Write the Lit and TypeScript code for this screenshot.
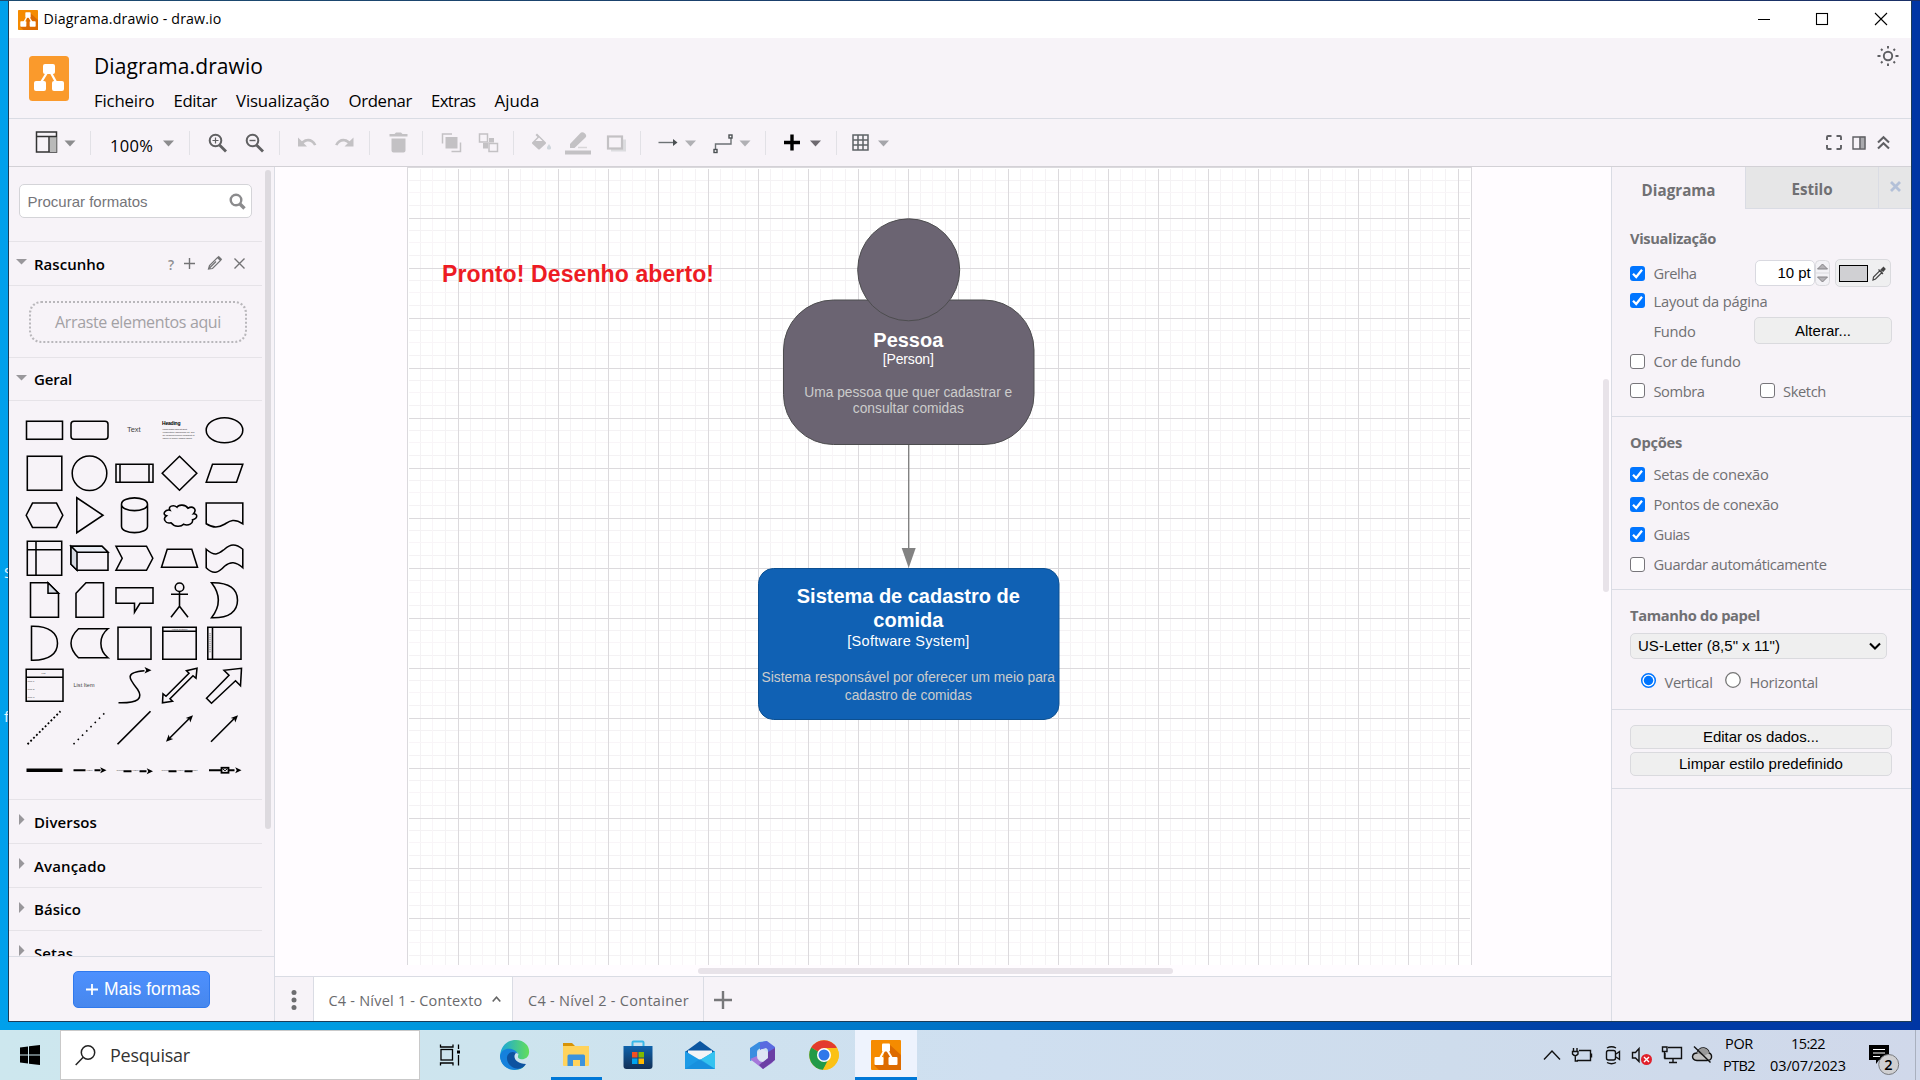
import { LitElement, html, css, svg, nothing } from "lit";
import { customElement, property } from "lit/decorators.js";

/** Inline text whose tracking is adjusted so that it spans a given width. */
@customElement("fit-text")
class FitText extends LitElement {
  @property({ type: Number }) w = 0;
  static styles = css`
    :host { display: inline-block; white-space: nowrap; line-height: 1.3; flex: none; }
    .run { display: inline-block; }
  `;
  render() {
    return html`<span class="run"><slot></slot></span>`;
  }
  firstUpdated() {
    const run = this.renderRoot.querySelector(".run") as HTMLElement;
    const n = (this.textContent ?? "").length;
    const spacing = (this.w - run.getBoundingClientRect().width) / n;
    run.style.letterSpacing = `${spacing}px`;
    this.style.width = `${this.w}px`;
  }
}

const fit = (text: string, w: number, cls = "") => html`<fit-text class=${cls} .w=${w}>${text}</fit-text>`;

const drawioLogo = (size: number, h = size) => html`
  <svg width=${size} height=${h} viewBox="0 0 30 30" preserveAspectRatio="none">
    <rect width="30" height="30" rx="1" fill="#f58b00" />
    <path d="M18 4 30 15V30H8L3 25 13 20 13 11Z" fill="#dd6b00" />
    <path d="M14 9 8 20M15.5 9 22 20" stroke="#fff" stroke-width="2" />
    <rect x="11" y="3.5" width="8" height="8" rx="1" fill="#fff" />
    <rect x="3.5" y="17" width="9" height="8" rx="1" fill="#fff" />
    <rect x="17.5" y="17" width="9" height="8" rx="1" fill="#fff" />
  </svg>`;

/* ---------- toolbar ---------- */
const drop = (x: number, c = "#8c8c8e") => svg`<path d="M${x} 140h11l-5.500 6z" fill=${c} />`;
const OFF = "#c3c1c4";

const toolbarGroups = [
  { from: 9, to: 91, art: svg`
    <rect x="36.500" y="131.500" width="20" height="20" fill="#f7f3f8" stroke="#333" stroke-width="1.500"/>
    <rect x="49.500" y="136.500" width="7" height="15" fill="#b9b9b9"/><path d="M36.500 136h20M49 136.500v15" stroke="#333" stroke-width="1.500"/>${drop(64.5)}` },
  { from: 91, to: 190, art: svg`<text x="110" y="151.500" class="zoom" textLength="43">100%</text>${drop(163)}` },
  { from: 190, to: 280, art: svg`
    <g stroke="#606062" fill="none" stroke-width="2"><circle cx="215.500" cy="140" r="5.800"/><path d="M219.500 144.500 226 151" stroke-width="2.800"/>
    <path d="M212.500 140h6M215.500 137v6" stroke-width="1.200"/>
    <circle cx="252.500" cy="140" r="5.800"/><path d="M256.500 144.500 263 151" stroke-width="2.800"/><path d="M249.500 140h6" stroke-width="1.400"/></g>` },
  { from: 280, to: 370, art: svg`
    <path d="M298 137v9h9l-3.300-3.300c4-3 8-1.800 10.300 2.300l2.400-.8c-3.200-6.500-9.500-7.500-14.500-3.400z" fill=${OFF}/>
    <path d="M353.500 137v9h-9l3.300-3.300c-4-3-8-1.800-10.300 2.300l-2.400-.8c3.200-6.500 9.500-7.500 14.500-3.400z" fill=${OFF}/>` },
  { from: 370, to: 423, art: svg`<path d="M389.500 133.500h5l1.500-1.500h5l1.500 1.500h5v2.500h-18zM391.500 138h14v12q0 2-2 2h-10q-2 0-2-2z" fill=${OFF}/>` },
  { from: 423, to: 514, art: svg`
    <g fill="none" stroke=${OFF} stroke-width="1.500"><path d="M442.500 143v-9.500h9.500M460.500 142v9h-9"/>
    <rect x="479.500" y="133.500" width="8" height="8"/><rect x="489" y="143" width="8.500" height="8"/></g>
    <rect x="445.500" y="136.500" width="12" height="11.500" fill=${OFF}/>
    <path d="M489 137.500h5v4.500h-6v6h-5v-5.500h6z" fill=${OFF}/>` },
  { from: 514, to: 641, art: svg`
    <path d="M537 133l8.500 8.500c.7.700.7 1.300 0 2l-5.500 5c-.7.700-1.300.7-2 0l-5.500-5c-.7-.7-.7-1.300 0-2l5-5-2-2z" fill=${OFF}/>
    <path d="M535.500 140.500l3.500-3.500 3.500 3.500z" fill="#f7f3f8"/><path d="M549 143.500c3 4 2.500 5.500 0 5.500s-3-1.500 0-5.500z" fill="#cfd6dc"/>
    <path d="M570 143.500l10-10.500q2-2.500 5 0 2.500 2.500 0 4.500l-10.500 10h-4.500z" fill=${OFF}/><path d="M578 147h9" stroke="#d8d6d9" stroke-width="1.500"/>
    <rect x="565" y="150" width="26" height="4" fill=${OFF}/>
    <rect x="611" y="139" width="15" height="12" fill="#dcdcdf"/><rect x="608" y="136" width="14" height="12" fill="#f7f3f8" stroke=${OFF} stroke-width="2.200"/>` },
  { from: 641, to: 766, art: svg`
    <path d="M658.500 142h15" stroke="#6d7275" stroke-width="1.400"/><path d="M673 138.500l4.500 3.500-4.500 3.500z" fill="#4b5053"/>${drop(685, "#b0b0b4")}
    <path d="M715.500 149v-5.500h15.500v-6" stroke="#6d7275" stroke-width="1.400" fill="none"/>
    <g fill="#fff" stroke="#4b5053" stroke-width="1.400"><rect x="714" y="149" width="3" height="3"/><rect x="729" y="134.500" width="3" height="3"/></g>${drop(739.5, "#b0b0b4")}` },
  { from: 766, to: 837, art: svg`<path d="M784 142h16M792 134v16" stroke="#000" stroke-width="3.400"/>${drop(810, "#6e6a70")}` },
  { from: 837, to: 910, art: svg`
    <path d="M853 134.500h15v15h-15zM858 134.500v15M863 134.500v15M853 139.500h15M853 144.500h15" stroke="#5e6366" stroke-width="1.500" fill="none"/>${drop(878, "#a5a5aa")}` },
];

/* ---------- shape palette, drawn around each cell's centre ---------- */
const arrowHead = (x: number, y: number, a: number, s = 1) =>
  svg`<path transform="translate(${x} ${y}) rotate(${a}) scale(${s})" d="M0 0-7-3.200-5.300 0-7 3.200z" fill="#000" stroke="none"/>`;

const shapes = [
  svg`<rect x="-18" y="-9" width="36" height="18"/>`,
  svg`<rect x="-18.500" y="-9" width="37" height="18" rx="3"/>`,
  svg`<text class="tiny" x="-7.500" y="1.500" textLength="13.500">Text</text>`,
  svg`<text class="micro" x="-17.500" y="-5.500" textLength="18.500">Heading</text>
    <g class="lorem"><text x="-17" y="-.200" textLength="25">Lorem ipsum dolor sit amet,</text><text x="-17" y="2.700" textLength="32">consectetur adipisicing elit, sed</text><text x="-17" y="5.500" textLength="32">do eiusmod tempor incididunt ut</text><text x="-17" y="8.300" textLength="30">labore et dolore magna aliqua.</text></g>`,
  svg`<ellipse rx="18.300" ry="12.500"/>`,
  svg`<rect x="-17.200" y="-17" width="34.500" height="34"/>`,
  svg`<circle r="17.300"/>`,
  svg`<path d="M-18.500-9h37V9h-37zM-14.500-9V9M14.500-9V9"/>`,
  svg`<path d="M0-17 17.300 0 0 17-17.300 0z"/>`,
  svg`<path d="M-18.300 9-12-9H18.300L12 9z"/>`,
  svg`<path d="M-18.300 0-12-12.200H12L18.300 0 12 12.200H-12z"/>`,
  svg`<path d="M-12.700-17.500 13.500 0-12.700 17.500z"/>`,
  svg`<path d="M-13-11V11C-13 19.500 13 19.500 13 11V-11C13-19.500-13-19.500-13-11C-13-2.500 13-2.500 13-11"/>`,
  svg`<path d="M-9.500-5C-14-6-18-1-13 .500-17 3-14.500 9-8.500 7.500-5 12 1.500 12 4 9 9 11 14 8 13 4.500 19 3 18-2 14-1.500 18-6 13-10 8.500-7 6-11-1-11-2.500-8-6-11-12-9-9.500-5z"/>`,
  svg`<path d="M-18.300-12.200H18.300V8.500C9 2.500 5 6 0 9-6 12.500-11 13-18.300 8.500z"/>`,
  svg`<path d="M-17.200-17H17.200V17H-17.200zM-17.200-8.500H17.200M-8.500-17V17"/>`,
  svg`<path d="M-18.500-12H12.500L18.500-6V12H-12.500L-18.500 6z"/><path d="M-18.500-12H12.500L18.500-6H-12.500z" fill="#e8ecf4"/><path d="M-18.500-12-12.500-6V12L-18.500 6z" fill="#d5d9e0"/>`,
  svg`<path d="M-18.500-12H12L18.300 0 12 12H-18.500L-12.300 0z"/>`,
  svg`<path d="M-18 9-12.300-9H12.300L18 9z"/>`,
  svg`<path d="M-18.300-9C-9-1-6-4.500 0-9 6-14.500 11-15 18.300-9V9.500C11 3 6 3 0 8-6 14.500-11 17-18.300 9.500z"/>`,
  svg`<path d="M-14-17.500H3.500L14-7V17H-14z"/><path d="M3.500-17.500V-7H14z" fill="#d8dde6"/>`,
  svg`<path d="M-3.500-17.500H14V17H-13.500V-7z"/>`,
  svg`<path d="M-18.500-12.500H18.500V3H5.500L0 12V3H-18.500z"/>`,
  svg`<circle cy="-13" r="4.300"/><path d="M0-8.500V6M-8.500-6H8.500M0 6-8.500 17M0 6 8.500 17"/>`,
  svg`<path d="M-13-17.500C5-18 13-11 13 0S5 18-13 17.500C-4 6-4-6-13-17.500z"/>`,
  svg`<path d="M-13-17C5-17.500 13-10 13 0S5 17.500-13 17z"/>`,
  svg`<path d="M-11-14.500H18.500C9-7 9 7 18.500 14.500H-11C-21 5-21-5-11-14.500z"/>`,
  svg`<rect x="-16.500" y="-16" width="33" height="32"/>`,
  svg`<path d="M-16.700-16H16.700V16H-16.700zM-16.700-12H16.700"/><text class="lorem dark" x="-8" y="-13" textLength="16">Vertical Container</text>`,
  svg`<path d="M-16.700-16H16.500V16H-16.700zM-12-16V16"/><path d="M-14.500-10V10" stroke-dasharray="1 1" stroke-width=".7"/>`,
  svg`<path d="M-18.300-16H18.500V16H-18.300zM-18.300-8H18.500"/><g class="lorem"><text x="-3" y="-11">List</text><text x="-17" y="-3">Item 1</text><text x="-17" y="5">Item 2</text><text x="-17" y="13">Item 3</text></g>`,
  svg`<text class="tiny small" x="-16" y="1.500" textLength="21">List Item</text>`,
  svg`<path d="M-16 17.500C4 18 9 13 3 4-5-6-11-13 10-14.500"/>${arrowHead(17, -15, 0)}`,
  svg`<path d="M-17 17.500-16.500 8.500-13.500 11 9.500-12 7-14.500 17.500-17 16.500-7 13.500-9.500-9.500 13.500-7 16z"/>`,
  svg`<path d="M-18 13 4.500-10-.500-15 17-17 16 .500 11-4.500-13 18z"/>`,
  svg`<path d="M-17 16 16-17" stroke-width="1.800" stroke-dasharray="1.900 2.200"/>`,
  svg`<path d="M-16 16 15-15" stroke-width="1.600" stroke-dasharray="1.600 4.400"/>`,
  svg`<path d="M-17 16 16-17" stroke-width="1.700"/>`,
  svg`<path d="M-10 10 10-10"/>${arrowHead(13.500, -13, -45)}${arrowHead(-13.500, 13.500, 135)}`,
  svg`<path d="M-13.500 13.500 10-10"/>${arrowHead(13.500, -13, -45)}`,
  svg`<path d="M-18 0H18" stroke-width="3.300"/>`,
  svg`<path d="M-16 0H-4M5 0H11" stroke-width="2"/><text class="lorem" x="-3" y="1">Label</text>${arrowHead(17, 0, 0, 0.9)}`,
  svg`<path d="M-11 1H-3M5 1H12" stroke-width="2"/><g class="lorem"><text x="-18" y="1">Source</text><text x="-2" y="1">Label</text></g>${arrowHead(18.500, 1, 0, 0.9)}`,
  svg`<path d="M-11 1H-3M5 1H13" stroke-width="1.800"/><g class="lorem"><text x="-18" y="1">Source</text><text x="-2" y="1">Label</text><text x="11" y="1">Target</text></g>`,
  svg`<path d="M-15.500 0H10" stroke-width="2"/><rect x="-3" y="-2.500" width="7" height="5" fill="#f7f3f8" stroke-width="1.800"/><path d="M-2-1.500.500.500 3-1.500" stroke-width="1"/>${arrowHead(17, 0, 0, 0.9)}`,
];

/* ---------- taskbar apps ---------- */
const apps = [
  { cls: "", art: svg`<g transform="translate(-6.500 0)"><g stroke="#000" fill="none" stroke-width="1.300"><rect x="10.500" y="9.500" width="11.500" height="10.500"/><path d="M10 4.500V7H22.500V4.500M10 25.500V23H22.500V25.500M28 4.500V9M28 15V25.500"/></g><rect x="26.500" y="10.500" width="3" height="3"/></g>` },
  { cls: "", art: svg`<path d="M1 16C2 4 10 0 17 0c9 0 14 7 13 13-.6 5-5 7-9 6-3-.8-2-3-1.500-5-2-4-9-3-9 4 0 7 7 11 15 8C20 33 2 31 1 16z" fill="url(#ea)"/><path d="M1 16c1-7 9-9 14-6 2 1 3 2 4 4-4-3-10 0-9 6 1 7 9 9 16 5C21 33 2 32 1 16z" fill="#1581dc"/><path d="M8 17c1-5 6-6 9-4-4 4 0 11 10 11-5 9-20 4-19-7z" fill="#0d53a0"/><defs><linearGradient id="ea"><stop stop-color="#1aa5dd"/><stop offset="1" stop-color="#63de5a"/></linearGradient></defs>` },
  { cls: "open", art: svg`<path d="M2 3h9l3 3h-12z" fill="#d79307"/><path d="M2 6h26v19q0 1-1 1H3q-1 0-1-1z" fill="#ffd35c"/><path d="M6.500 26V16q0-1.500 1.500-1.500H22.500Q24 14.500 24 16V26H19V20H12V26z" fill="#3c93dc"/>` },
  { cls: "", art: svg`<path d="M9.500 7V2.500q0-1 1-1h9q1 0 1 1V7" fill="none" stroke="#39b8e8" stroke-width="2"/><path d="M.500 6H29.500V26q0 3-3 3H3.500q-3 0-3-3z" fill="url(#st)"/><path d="M9 12h5.500v5.500H9z" fill="#f25022"/><path d="M15.500 12H21v5.500h-5.500z" fill="#7fba00"/><path d="M9 18.500h5.500V24H9z" fill="#00a4ef"/><path d="M15.500 18.500H21V24h-5.500z" fill="#ffb900"/><defs><linearGradient id="st" x2="0" y2="1"><stop stop-color="#0f63ac"/><stop offset="1" stop-color="#123057"/></linearGradient></defs>` },
  { cls: "", art: svg`<path d="M0 12 15 1 30 12V16H0z" fill="#0c56a0"/><path d="M3 10.500H27V20H3z" fill="#f4f4f6"/><path d="M0 11 15 20 30 11V29H0z" fill="#1d9be6"/><path d="M30 11V29L12 18.200 15 20z" fill="#35c3f0"/><path d="M0 29 15 19 30 29z" fill="#1689d8" opacity=".6"/>` },
  { cls: "", art: svg`<path d="M12 2 3 8v13l7-3v-6q0-2 2-3l6-3 2-5z" fill="#3a8ee0"/><path d="M13 2.500 20 1l8 6v13l-7-3v-6q0-2-2-3l-6 2z" fill="#5a6be0"/><path d="M3 19l7-3q1 6 6 6l12-3-3 4-9 6z" fill="#a478da"/><path d="M21 12l7-4v12l-12 9-4-4 9-7z" fill="#6b3fa5"/><path d="M10.500 12 15 9l5.500 3v6L16 21.500l-5.500-3z" fill="#dfe6f4"/>` },
  { cls: "", art: svg`<circle cx="15" cy="15" r="14.800" fill="#fbc116"/><path d="M15 15 2.200 7.600A14.800 14.800 0 0 1 27.800 7.600z" fill="#e33b2e"/><path d="M15 15 2.200 7.600A14.800 14.800 0 0 0 14 29.800L20 18z" fill="#229a48"/><path d="M15 8H28A14.800 14.800 0 0 1 14 29.800L21.500 18z" fill="#fbc116"/><circle cx="15" cy="15" r="7" fill="#fff"/><circle cx="15" cy="15" r="5.500" fill="#2f78ea"/>` },
];

@customElement("app-root")
class AppRoot extends LitElement {
  static styles = css`
    :host { display: block; width: 1920px; height: 1080px; overflow: hidden; font-family: "Open Sans", "Noto Sans", sans-serif; font-size: 14.700px; color: #000; }
    * { box-sizing: border-box; }
    svg { display: block; flex: none; overflow: visible; }
    .desktop { width: 1920px; height: 1080px; display: flex; flex-direction: column;
      background: linear-gradient(90deg, #00a0ec 0, #009be0 350px, #0073c6 950px, #0040a6 1560px, #0036a4 1920px); }
    .workspace { display: flex; height: 1030px; padding-top: 1px; background: linear-gradient(90deg, #1b4b70, #1a2f66) top / 100% 1px no-repeat; }
    .strip { width: 8px; overflow: hidden; color: #e8f6ff; font-size: 15px; padding: 561px 0 0 4px; line-height: 20px; display: flex; flex-direction: column; gap: 124px; }
    .window { width: 1904px; height: 1021px; background: #f7f3f8; border: 1px solid #1c3c58; border-top: 0; display: flex; flex-direction: column; }

    .titlebar { height: 37px; background: #fff; display: flex; align-items: center; padding: 0 24px 0 9px; gap: 5.500px; flex: none; }
    .titlebar .caption { font-size: 14.200px; }
    .titlebar .controls { margin-top: -1px; }
    .grow { flex: 1; }
    .header { height: 81px; border-bottom: 1px solid #dadce4; display: flex; padding: 0 12px 0 20px; flex: none; }
    .logo { padding-top: 18px; }
    .names { padding-left: 25px; display: flex; flex-direction: column; }
    .doc { font-size: 21px; height: 28px; margin-top: 14px; }
    .menu { display: flex; gap: 19px; margin-top: 10px; font-size: 16.800px; }
    .sun { padding-top: 7px; }
    .toolbar { height: 48px; display: flex; align-items: center; border-bottom: 1px solid #d3d1d6; flex: none; }
    .tgroup { display: flex; align-items: center; height: 24px; border-right: 1px solid #e2e1e6; }
    .tgroup:last-of-type { border: 0; }
    .zoom { font-size: 16.500px; }

    .body { display: flex; height: 854px; }
    .sidebar { width: 266px; border-right: 1px solid #dadce4; display: flex; flex-direction: column; flex: none; }
    .scroller { height: 790px; display: flex; overflow: hidden; border-bottom: 1px solid #dadce4; flex: none; }
    .list { width: 253px; flex: none; }
    .bar { width: 6px; height: 659px; margin: 3px 0 0 3px; border-radius: 3px; background: #dddadf; }
    .searchwrap { height: 75px; padding: 17px 0 0 10px; border-bottom: 1px solid #e6e3e8; }
    .search { width: 233px; height: 34px; background: #fff; border: 1px solid #d4d4d8; border-radius: 5px; display: flex; align-items: center; justify-content: space-between; padding: 0 5px 0 7.500px; font-family: "Liberation Sans", sans-serif; font-size: 15px; color: #75757a; }
    .search fit-text { margin-top: 1px; }
    .sec { border-bottom: 1px solid #e6e3e8; display: flex; align-items: center; font-weight: 600; font-size: 15px; height: 43.700px; padding-left: 7px; }
    .sec fit-text { margin-top: 2px; }
    .sec svg { margin-right: 7px; margin-top: -4px; }
    .sec .tools { margin: 0 0 0 62px; }
    .dropzone { height: 72px; border-bottom: 1px solid #e6e3e8; padding: 15px 0 0 20px; }
    .dropbox { width: 218px; height: 42px; border: 2px dotted #b9b7bb; border-radius: 12px; display: flex; align-items: center; justify-content: center; color: #a3a1a5; font-size: 16px; padding-top: 2px; }
    .palette { height: 399px; padding: 8px 0 0 13px; border-bottom: 1px solid #e6e3e8; display: grid; grid-template-columns: repeat(5, 45px); grid-template-rows: repeat(9, 42.500px); }
    .palette svg { fill: none; stroke: #000; stroke-width: 1.550; }
    .palette text { fill: #444; stroke: none; font-family: "Liberation Sans", sans-serif; }
    .palette .tiny { font-size: 7.500px; } .palette .tiny.small { font-size: 5.500px; }
    .palette .micro { font-size: 5px; font-weight: bold; fill: #000; }
    .lorem { font-size: 2.500px; }
    .morewrap { flex: 1; padding: 14px 0 0 64px; }
    .more { width: 137px; height: 37px; border: 1px solid #3079ed; border-radius: 5px; background: linear-gradient(#4d90fe, #4787ed); color: #fff; font-family: "Liberation Sans", sans-serif; font-size: 17.500px; display: flex; align-items: center; gap: 6px; padding-left: 12px; }

    .center { width: 1336px; display: flex; flex-direction: column; background: #fffcff; }
    .canvas { height: 810px; border-bottom: 1px solid #dadce4; position: relative; padding-left: 132px; overflow: hidden; flex: none; }
    .canvas text { font-family: "Liberation Sans", sans-serif; }
    .vbar { position: absolute; left: 1328px; top: 212px; width: 6px; height: 213px; background: #e8e3e9; border-radius: 3px; }
    .hbar { position: absolute; left: 423px; top: 801px; width: 475px; height: 6px; background: #e8e3e9; border-radius: 3px; }
    .tabs { height: 44px; background: #f7f3f8; display: flex; align-items: center; color: #6a6a6d; font-size: 14.500px; font-weight: 500; }
    .tab { height: 44px; display: flex; align-items: center; border-right: 1px solid #dadce4; }
    .tab fit-text { margin-top: 4px; }
    .dots { width: 39px; padding: 2px 0 0 16px; }
    .on { width: 199px; background: #fff; padding-left: 14.500px; gap: 9px; }
    .two { width: 191px; padding-left: 15px; }
    .plus { padding: 2px 0 0 10px; }

    .panel { width: 300px; border-left: 1px solid #dadce4; color: #707073; font-size: 14.700px; display: flex; flex-direction: column; }
    .ptabs { display: flex; height: 42px; font-weight: 700; font-size: 15.200px; }
    .ptab { display: flex; align-items: center; justify-content: center; }
    .p1 { width: 133px; padding-top: 6px; }
    .p2 { width: 134px; background: #e6e6e7; border: 1px solid #dadce4; border-top: 0; padding-top: 5px; }
    .p3 { width: 32px; background: #e6e6e7; border-bottom: 1px solid #dadce4; padding-bottom: 3px; }
    .psec { border-bottom: 1px solid #dadce4; padding: 9px 0 0 18px; }
    .s1 { height: 208px; padding-top: 13px; } .s2 { height: 173px; } .s3 { height: 120px; } .s4 { height: 79px; padding-top: 15px; }
    .h { font-weight: 700; height: 33px; display: flex; align-items: center; font-size: 14.700px; }
    .s1 .h { height: 37px; padding-bottom: 3px; }
    .s3 .h { height: 34px; }
    .row { display: flex; align-items: center; height: 30px; }
    .row > fit-text, .indent fit-text { margin-top: 2px; }
    .r28 { height: 28px; } .r27 { height: 27px; } .r33 { height: 33px; } .r31 { height: 31px; }
    .cb { width: 15px; height: 15px; border: 1.500px solid #77757a; border-radius: 3px; background: #fff; margin-right: 8.500px; flex: none; }
    .cb.ck { border: 0; background: #0075ff; }
    .cb.second { margin-left: 55px; }
    .indent { margin-left: 23.500px; }
    .ui { font-family: "Liberation Sans", sans-serif; color: #000; font-size: 15px; }
    .num { width: 60px; height: 26px; border: 1px solid #d9d9e0; border-radius: 5px; background: #fff; display: flex; align-items: center; justify-content: flex-end; padding-right: 3px; margin-left: 58px; }
    .spin { width: 15px; height: 26px; }
    .colour { width: 56px; height: 28px; border: 1px solid #dadade; border-radius: 5px; background: #efeff0; margin-left: 5px; display: flex; align-items: center; gap: 4px; padding-left: 3px; }
    .swatch { width: 29px; height: 17px; border: 1px solid #000; background: #d0d0d3; }
    .btn { border: 1px solid #dadade; border-radius: 5px; background: #efefef; display: flex; align-items: center; justify-content: center; width: 262px; height: 24px; margin-bottom: 2.500px; }
    .alt { width: 138px; height: 27px; margin: 0 0 0 58.500px; }
    .sel { width: 257px; height: 26px; border: 1px solid #dadade; border-radius: 5px; background: #efefef; display: flex; align-items: center; justify-content: space-between; padding: 0 5px 0 7px; }
    .radios { height: 42px; padding: 0 0 0 10.500px; }
    .radios > fit-text { margin: 6px 12px 0 9px; }

    .taskbar { height: 50px; display: flex; background: linear-gradient(90deg, #cde7ee, #cde4ee 500px, #cfdff0 1000px, #cedcec 1450px, #d0d8ea); font-size: 14.500px; }
    .start { width: 60px; padding: 15px 0 0 20px; }
    .find { width: 360px; height: 50px; background: #fff; border: 1px solid #c9c9c9; display: flex; align-items: center; gap: 14px; padding-left: 14px; font-size: 18px; color: #333; }
    .find fit-text { margin-top: 2px; }
    .apps { display: flex; padding-left: 1px; width: 435px; }
    .app { width: 62px; height: 50px; display: flex; justify-content: center; padding-top: 10px; }
    .open { background: linear-gradient(#0078d7, #0078d7) center bottom / 51px 3px no-repeat; }
    .active { background: linear-gradient(#0078d7, #0078d7) center bottom / 100% 3px no-repeat #eef3fd; }
    .tray { display: flex; align-items: center; }
    .stack { display: flex; flex-direction: column; align-items: center; line-height: 22px; font-size: 14.500px; }
    .stack fit-text { height: 22.300px; line-height: 22px; }
    .clock { margin-left: 15px; }
    .notes { margin-left: 22px; }
    .edge { width: 1px; height: 50px; background: #a9b0be; margin: 0 4px 0 15px; }
  `;

  private cb(on: boolean, cls = "") {
    return html`<span class="cb ${on ? "ck" : ""} ${cls}">${on
      ? html`<svg width="15" height="15" viewBox="0 0 15 15"><path d="M3 7.800 6.200 11 12 3.800" fill="none" stroke="#fff" stroke-width="2.300"/></svg>`
      : nothing}</span>`;
  }

  private section(name: string, w: number, open: boolean, extra: unknown = nothing) {
    return html`<div class="sec">
      <svg width="11" height="11" viewBox="0 0 11 11"><path d=${open ? "M0 3h11L5.500 8.500z" : "M3 0v11l5.500-5.500z"} fill="#99979b"/></svg>
      ${fit(name, w)}${extra}</div>`;
  }

  private diagram() {
    return html`<svg width="1066" height="798" viewBox="407 167 1066 798">
      <defs>
        <pattern id="grid" x="408" y="168" width="50" height="50" patternUnits="userSpaceOnUse">
          <path d="M12.500 0V50M37.500 0V50M0 12.500H50M0 37.500H50" stroke="#f4f2f4"/>
          <path d="M24.500 0V50M0 24.500H50" stroke="#f9f5f8"/>
          <path d="M.500 0V50M0 .500H50" stroke="#dcdadd"/>
        </pattern>
      </defs>
      <rect x="407" y="167" width="1065" height="798" fill="#dbd9dd"/>
      <rect x="408" y="168" width="1063" height="797" fill="#fff"/>
      <rect x="409" y="169" width="1061" height="796" fill="url(#grid)"/>
      <text x="442" y="281.700" font-size="23" font-weight="bold" fill="#ed1c24" textLength="272">Pronto! Desenho aberto!</text>
      <rect x="783.500" y="300" width="250.500" height="144.500" rx="50" fill="#6b6472" stroke="#4d4d4f"/>
      <circle cx="908.700" cy="269.800" r="51" fill="#6b6472" stroke="#4d4d4f"/>
      <path d="M908.700 445V550" stroke="#828282" stroke-width="1.400"/><path d="M901.700 548H915.700L908.700 568z" fill="#828282"/>
      <rect x="758.500" y="568.500" width="300.500" height="151" rx="15" fill="#1061b4" stroke="#0d5091"/>
      <g text-anchor="middle" fill="#fff">
        <text x="908.300" y="346.700" font-size="20" font-weight="bold" textLength="70">Pessoa</text>
        <text x="908.300" y="364" font-size="14" textLength="51">[Person]</text>
        <g fill="#cccccc" font-size="13.800">
          <text x="908.300" y="397" textLength="208">Uma pessoa que quer cadastrar e</text>
          <text x="908.300" y="413" textLength="111">consultar comidas</text>
          <text x="908.300" y="682" textLength="293.500">Sistema responsável por oferecer um meio para</text>
          <text x="908.300" y="700" textLength="127">cadastro de comidas</text>
        </g>
        <text x="908.300" y="603" font-size="20" font-weight="bold" textLength="223">Sistema de cadastro de</text>
        <text x="908.300" y="627" font-size="20" font-weight="bold" textLength="70">comida</text>
        <text x="908.300" y="646" font-size="14.500" textLength="122">[Software System]</text>
      </g>
    </svg>`;
  }

  render() {
    return html`<div class="desktop">
      <div class="workspace">
        <div class="strip"><span>S</span><span>f</span></div>
        <div class="window">
          <div class="titlebar">${drawioLogo(20)}${fit("Diagrama.drawio - draw.io", 178, "caption")}<span class="grow"></span>
            <svg class="controls" width="130" height="14" viewBox="0 0 130 14" fill="none" stroke="#000" stroke-width="1.100"><path d="M1 7.500H13M118 1 130 13M130 1 118 13"/><rect x="59.500" y="1.500" width="11" height="11"/></svg>
          </div>
          <div class="header">
            <div class="logo"><svg width="40" height="45" viewBox="0 0 40 45"><rect width="40" height="45" rx="3.500" fill="#fa9a2c"/><path d="M19 15 11 28M21 15 28 28" stroke="#fff" stroke-width="2.300"/><g fill="#fff"><rect x="14" y="8" width="12" height="10" rx="2"/><rect x="5" y="25" width="12" height="10" rx="2"/><rect x="23" y="25" width="12" height="10" rx="2"/></g></svg></div>
            <div class="names"><div class="doc">${fit("Diagrama.drawio", 169)}</div>
              <div class="menu">${fit("Ficheiro", 60.5)}${fit("Editar", 43.5)}${fit("Visualização", 93.5)}${fit("Ordenar", 63.5)}${fit("Extras", 44.5)}${fit("Ajuda", 45)}</div></div>
            <span class="grow"></span>
            <div class="sun"><svg width="22" height="22" viewBox="-11 -11 22 22" fill="none" stroke="#5e5e62" stroke-width="1.900"><circle r="4.200"/><path d="M0-10V-7.500M0 7.500V10M-10.500 0H-7.500M7.500 0H10.500M-7-7-5.500-5.500M7-7 5.500-5.500M-7 7-5.500 5.500M7 7 5.500 5.500"/></svg></div>
          </div>
          <div class="toolbar">
            ${toolbarGroups.map((g) => html`<div class="tgroup"><svg width=${g.to - g.from - 1} height="24" viewBox="${g.from} 130.500 ${g.to - g.from - 1} 24">${g.art}</svg></div>`)}
            <span class="grow"></span>
            <svg width="90" height="24" viewBox="1821.500 130.500 90 24" fill="none" stroke="#606064" stroke-width="1.900">
              <path d="M1827.500 139.500V136.500Q1827.500 135.500 1828.500 135.500H1832M1837 135.500H1840.500Q1841.500 135.500 1841.500 136.500V139.500M1841.500 144.500V147.500Q1841.500 148.500 1840.500 148.500H1837M1832 148.500H1828.500Q1827.500 148.500 1827.500 147.500V144.500"/>
              <rect x="1860" y="136" width="6" height="12" fill="#a9a9ad" stroke="none"/><path d="M1853.500 136.500H1865.500V148.500H1853.500zM1860.500 137V148" stroke-width="1.400"/>
              <path d="M1878.500 142 1884 136.800 1889.500 142M1878.500 148 1884 142.800 1889.500 148" stroke-width="2.100"/></svg>
          </div>
          <div class="body">
            <div class="sidebar">
              <div class="scroller"><div class="list">
                <div class="searchwrap"><div class="search">${fit("Procurar formatos", 120)}
                  <svg width="17" height="17" viewBox="0 0 17 17" fill="none" stroke="#8b8b8d"><circle cx="7" cy="7" r="5.300" stroke-width="2.400"/><path d="M10.500 10.500 15.500 15.500" stroke-width="3.300"/></svg></div></div>
                ${this.section("Rascunho", 71, true, html`<svg class="tools" width="80" height="16" viewBox="0 0 80 16" fill="none" stroke="#737375" stroke-width="1.400">
                  <text x="1" y="15" fill="#8e8e90" stroke="none" font-size="13.500">?</text><path d="M17 8.500H28M22.500 3V14M67.500 3.500 77.500 13.500M77.500 3.500 67.500 13.500"/>
                  <path d="M41.500 14 42.500 10.500 50.500 2.500 53.500 5.500 45.500 13.500zM42.500 13 49 6.500" stroke-width="1.200"/><path d="M51 1.500 54.500 5" stroke-width="2"/></svg>`)}
                <div class="dropzone"><div class="dropbox">${fit("Arraste elementos aqui", 166)}</div></div>
                ${this.section("Geral", 38, true)}
                <div class="palette">${shapes.map((s) => html`<svg width="45" height="42.500" viewBox="-22.500 -21.250 45 42.500">${s}</svg>`)}</div>
                ${this.section("Diversos", 63, false)}${this.section("Avançado", 72, false)}${this.section("Básico", 47, false)}${this.section("Setas", 39, false)}
              </div><div class="bar"></div></div>
              <div class="morewrap"><div class="more"><svg width="12" height="12" viewBox="0 0 12 12"><path d="M0 5.500H12M6 0V11" stroke="#fff" stroke-width="1.800"/></svg>${fit("Mais formas", 96)}</div></div>
            </div>
            <div class="center">
              <div class="canvas">${this.diagram()}<div class="vbar"></div><div class="hbar"></div></div>
              <div class="tabs">
                <div class="tab dots"><svg width="6" height="22" viewBox="0 0 6 22" fill="#6d6d70"><circle cx="3" cy="3.500" r="2.500"/><circle cx="3" cy="11" r="2.500"/><circle cx="3" cy="18.500" r="2.500"/></svg></div>
                <div class="tab on">${fit("C4 - Nível 1 - Contexto", 154)}<svg width="9" height="6" viewBox="0 0 9 6"><path d="M.700 5.500 4.500 1.200 8.300 5.500" fill="none" stroke="#666" stroke-width="1.600"/></svg></div>
                <div class="tab two">${fit("C4 - Nível 2 - Container", 161)}</div>
                <div class="plus"><svg width="18" height="18" viewBox="0 0 18 18"><path d="M0 9H18M9 0V18" stroke="#77777a" stroke-width="2.400"/></svg></div>
              </div>
            </div>
            <div class="panel">
              <div class="ptabs"><div class="ptab p1">${fit("Diagrama", 74)}</div><div class="ptab p2">${fit("Estilo", 41)}</div>
                <div class="ptab p3"><svg width="11" height="11" viewBox="0 0 11 11"><path d="M1 1 10 10M10 1 1 10" stroke="#b3c0d8" stroke-width="2.800"/></svg></div></div>
              <div class="psec s1"><div class="h">${fit("Visualização", 86)}</div>
                <div class="row r28">${this.cb(true)}${fit("Grelha", 43)}<div class="num ui">${fit("10 pt", 33)}</div>
                  <svg class="spin" width="15" height="26" viewBox="0 0 15 26"><rect x=".500" y=".500" width="14" height="25" rx="4" fill="#f3f2f6" stroke="#dadade"/><path d="M0 13H15" stroke="#dadade"/><path d="M2.500 9H12.500L7.500 4zM2.500 17H12.500L7.500 22z" fill="#b4b2b6" stroke="#858387"/></svg>
                  <div class="colour"><div class="swatch"></div><svg width="14" height="15" viewBox="0 0 14 15" fill="none" stroke="#444" stroke-width="1.200"><path d="M1 14 1.500 11 8 4.500 10 6.500 3.500 13zM6.500 3.500 11 8"/><path d="M9 4.500 11.500 2 12.500 3 10.500 5.500" stroke-width="2"/></svg></div></div>
                <div class="row r27">${this.cb(true)}${fit("Layout da página", 114)}</div>
                <div class="row r33"><span class="indent">${fit("Fundo", 42)}</span><div class="btn alt ui">${fit("Alterar...", 56)}</div></div>
                <div class="row r28">${this.cb(false)}${fit("Cor de fundo", 87)}</div>
                <div class="row r31">${this.cb(false)}${fit("Sombra", 51)}${this.cb(false, "second")}${fit("Sketch", 43)}</div>
              </div>
              <div class="psec s2"><div class="h">${fit("Opções", 52)}</div>
                <div class="row">${this.cb(true)}${fit("Setas de conexão", 115)}</div>
                <div class="row">${this.cb(true)}${fit("Pontos de conexão", 125)}</div>
                <div class="row">${this.cb(true)}${fit("Guias", 36)}</div>
                <div class="row">${this.cb(false)}${fit("Guardar automáticamente", 173)}</div></div>
              <div class="psec s3"><div class="h">${fit("Tamanho do papel", 130)}</div>
                <div class="sel ui">${fit('US-Letter (8,5" x 11")', 142)}<svg width="12" height="8" viewBox="0 0 12 8"><path d="M1 1.500 6 6.500 11 1.500" fill="none" stroke="#000" stroke-width="2.100"/></svg></div>
                <div class="row radios"><svg width="15" height="15" viewBox="0 0 15 15"><circle cx="7.500" cy="7.500" r="6.800" fill="#fff" stroke="#0075ff" stroke-width="1.500"/><circle cx="7.500" cy="7.500" r="4.700" fill="#0075ff"/></svg>${fit("Vertical", 48)}
                  <svg width="16" height="16" viewBox="0 0 16 16"><circle cx="8" cy="8" r="7.300" fill="#fff" stroke="#767676" stroke-width="1.300"/></svg>${fit("Horizontal", 68.5)}</div></div>
              <div class="psec s4"><div class="btn ui">${fit("Editar os dados...", 116)}</div><div class="btn ui">${fit("Limpar estilo predefinido", 164)}</div></div>
            </div>
          </div>
        </div>
      </div>
      <div class="taskbar">
        <div class="start"><svg width="20" height="20" viewBox="0 0 20 20"><path d="M0 2.500 8 1.500V9.500H0zM9 1.300 20 0V9.500H9zM0 10.500H8V18.500L0 17.500zM9 10.500H20V20L9 18.700z"/></svg></div>
        <div class="find"><svg width="21" height="21" viewBox="0 0 21 21" fill="none" stroke="#222" stroke-width="1.500"><circle cx="13" cy="7.500" r="6.700"/><path d="M8.200 12.300.700 20"/></svg>${fit("Pesquisar", 80)}</div>
        <div class="apps">${apps.map((a) => html`<div class="app ${a.cls}"><svg width="30" height="30" viewBox="0 0 30 30">${a.art}</svg></div>`)}</div>
        <div class="app active">${drawioLogo(30)}</div>
        <span class="grow"></span>
        <div class="tray">
          <svg width="180" height="50" viewBox="1543 1030 180 50" fill="none" stroke="#111" stroke-width="1.400">
            <path d="M1544 1059.500 1552 1051 1560 1059.500"/>
            <path d="M1579 1050.500H1590.500V1060.500H1577M1591.500 1053.500V1057.500M1572.500 1051.500H1578V1054Q1575.300 1057.500 1572.500 1054zM1573.500 1051V1048M1577 1051V1048M1575.300 1056V1061H1578"/>
            <rect x="1606.500" y="1050.500" width="9" height="9.500" rx="2"/><path d="M1616 1054 1619.500 1051.500V1059.500L1616 1057M1607 1048Q1611.500 1045.500 1616 1048M1607 1062.500Q1611.500 1065 1616 1062.500"/>
            <path d="M1632.500 1052.500H1635.500L1639 1048.500V1061.500L1635.500 1058H1632.500z"/><circle cx="1646.500" cy="1059.500" r="5.500" fill="#e0202b" stroke="none"/><path d="M1644 1057 1649 1062M1649 1057 1644 1062" stroke="#fff"/>
            <path d="M1668 1047.500H1681.500V1058.500H1665V1053M1673 1059V1062.500M1669 1062.500H1677M1662.500 1047H1667V1051.500H1662.500zM1664.500 1052V1058.500"/>
            <path d="M1697 1060.500Q1692.500 1060 1692.500 1056.500 1693 1053 1697 1053 1699 1047.500 1704 1048 1708.500 1049 1709 1053 1712 1054 1711.500 1057.500 1711 1060.500 1707 1060.500z" fill="#c2c2c2"/><path d="M1697 1053Q1699 1047.500 1704 1048 1708.500 1049 1709 1053L1704 1056z" fill="#999" stroke="none"/><path d="M1694 1046.500 1710.500 1062.500"/>
          </svg>
          <div class="stack">${fit("POR", 28)}${fit("PTB2", 32)}</div>
          <div class="stack clock">${fit("15:22", 34)}${fit("03/07/2023", 76)}</div>
          <svg class="notes" width="32" height="50" viewBox="1868 1030 32 50"><path d="M1869 1045H1889V1060H1879L1876 1064V1060H1869z"/><path d="M1873 1049.500H1885M1873 1053H1885M1873 1056.500H1880" stroke="#fff" stroke-width="1.200"/><circle cx="1888.700" cy="1064.500" r="10" fill="#cfcfd1" stroke="#77797d"/><text x="1884.300" y="1070" font-size="14.500" font-weight="600">2</text></svg>
          <div class="edge"></div>
        </div>
      </div>
    </div>`;
  }
}
